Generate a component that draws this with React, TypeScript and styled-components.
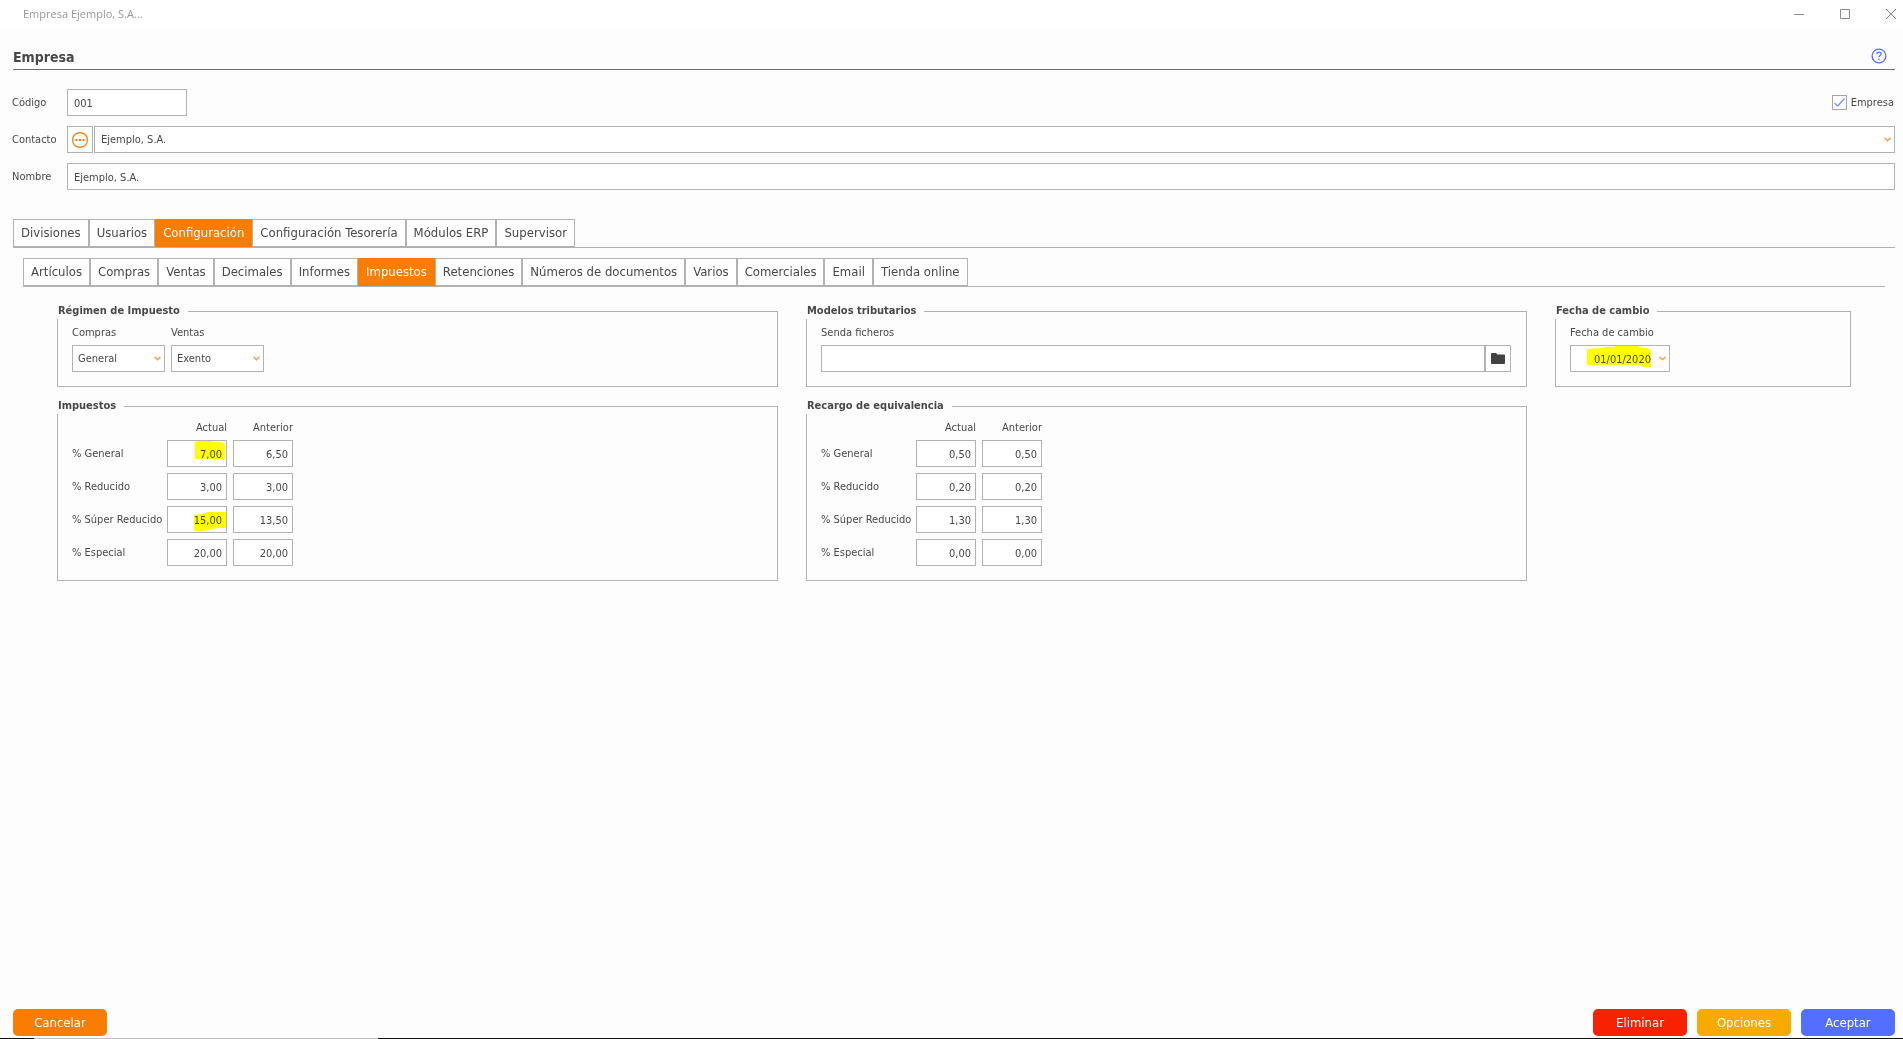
import React from "react";
import styled, { createGlobalStyle } from "styled-components";

const color = {
  page: "#fdfdfd",
  line: "#b2b2b2",
  text: "#484848",
  orange: "#f87d00",
  blue: "#546fff",
  red: "#f82100",
  amber: "#f7ab00",
  mark: "#ffff00",
};

const GlobalStyle = createGlobalStyle`
  *, *::before, *::after { box-sizing: border-box; }
  body {
    margin: 0;
    background: ${color.page};
    color: ${color.text};
    font: 11px/14px "DejaVu Sans Condensed", Tahoma, "Noto Sans", sans-serif;
  }
  button, input, select { font: inherit; color: inherit; }
`;

const Window = styled.div`
  min-height: 100vh;
  display: flex;
  flex-direction: column;
`;

const TitleBar = styled.header`
  display: flex;
  justify-content: space-between;
  height: 29px;
  padding-left: 23px;
  background: #fff;
  color: #999;
  font: 11px/28px "Open Sans", "Noto Sans", sans-serif;
`;

const WindowControls = styled.div`
  display: flex;
  margin-right: -11px;
  overflow: hidden;
`;

const WindowButton = styled.button`
  display: grid;
  place-items: center;
  width: 46px;
  height: 27px;
  padding: 0;
  border: 0;
  background: none;
  color: #8c8c8c;
`;

const TitleRow = styled.div`
  display: flex;
  align-items: center;
  justify-content: space-between;
  height: 41px;
  margin: 0 8px 0 13px;
  padding: 14px 8px 0 0;
  border-bottom: 1px solid #6e6e6e;
`;

const Title = styled.h1`
  margin: 0;
  padding-top: 2px;
  font-size: 14px;
  line-height: 18px;
`;

const HelpButton = styled.button`
  display: flex;
  padding: 0;
  border: 0;
  background: none;
  color: ${color.blue};
`;

const Main = styled.main`
  flex: 1;
  padding: 19px 8px 0 12px;
`;

const Form = styled.div`
  display: grid;
  gap: 10px;
  margin-bottom: 29px;
`;

const FormRow = styled.div`
  display: grid;
  grid-template-columns: 55px minmax(0, 1fr);
  align-items: center;
`;

const Between = styled.div`
  display: flex;
  align-items: center;
  justify-content: space-between;
`;

const Joined = styled.div<{ $gap?: number }>`
  display: flex;
  gap: ${(p) => p.$gap ?? 0}px;
`;

const Input = styled.input<{ $w?: number; $right?: boolean; $padEnd?: number }>`
  display: block;
  width: ${(p) => (p.$w ? `${p.$w}px` : "100%")};
  min-width: 0;
  height: 27px;
  padding: 1px ${(p) => p.$padEnd ?? 4}px 0 6px;
  border: 1px solid ${color.line};
  border-radius: 0;
  background: #fff;
  outline: 0;
  text-align: ${(p) => (p.$right ? "right" : "left")};
`;

const IconButton = styled.button`
  display: grid;
  flex: none;
  place-items: center;
  width: 26px;
  height: 27px;
  padding: 0;
  border: 1px solid ${color.line};
  background: #fff;
`;

const FieldBox = styled.div<{ $w?: number }>`
  position: relative;
  width: ${(p) => (p.$w ? `${p.$w}px` : "100%")};
`;

const Select = styled.select<{ $pad?: number }>`
  display: block;
  width: 100%;
  height: 27px;
  padding: 1px 16px 0 ${(p) => p.$pad ?? 5}px;
  border: 1px solid ${color.line};
  border-radius: 0;
  background: #fff;
  appearance: none;
  outline: 0;
`;

const Arrow = styled.svg`
  position: absolute;
  top: 11px;
  right: 4px;
  pointer-events: none;
`;

const Marker = styled.svg`
  position: absolute;
  inset: 0;
  width: 100%;
  height: 100%;
  mix-blend-mode: multiply;
  pointer-events: none;
`;

const CheckLabel = styled.label`
  display: flex;
  align-items: center;
  gap: 4px;
  padding-right: 1px;
`;

const CheckFrame = styled.span`
  position: relative;
  display: flex;
`;

const Check = styled.input`
  width: 15px;
  height: 15px;
  margin: 0;
  border: 1px solid #a6a6a6;
  background: #fff;
  appearance: none;
  &:not(:checked) + svg { display: none; }
`;

const CheckMark = styled.svg`
  position: absolute;
  inset: 0;
  pointer-events: none;
`;

const Tabs = styled.nav<{ $indent?: boolean }>`
  display: flex;
  margin-left: ${(p) => (p.$indent ? "1px" : "0")};
  border-bottom: 1px solid ${color.line};
`;

const Tab = styled.button<{ $active?: boolean }>`
  height: 28px;
  padding: 0 7px;
  border: 1px solid ${(p) => (p.$active ? color.orange : color.line)};
  background: ${(p) => (p.$active ? color.orange : "#fff")};
  color: ${(p) => (p.$active ? "#fff" : color.text)};
  font-size: 13px;
  white-space: nowrap;
`;

const SubPanel = styled.section`
  padding: 10px 10px 0 11px;
`;

const Groups = styled.div`
  display: grid;
  grid-template-columns: 721fr 721fr 296fr;
  gap: 11px 28px;
  margin: 16px 34px 0;
`;

const Group = styled.fieldset`
  min-width: 0;
  margin: 0;
  padding: 7px 15px 14px 14px;
  border: 1px solid ${color.line};
`;

const Legend = styled.legend`
  margin-left: -15px;
  padding: 0 8px 0 1px;
  background: ${color.page};
  font-weight: bold;
  line-height: 16px;
`;

const Field = styled.div<{ $w?: number }>`
  display: grid;
  gap: 5px;
  width: ${(p) => (p.$w ? `${p.$w}px` : "auto")};
`;

const RateTable = styled.table`
  border-spacing: 0;
  th { padding: 0 0 5px; font-weight: normal; text-align: right; }
  td { padding: 0 6px 6px 0; }
  thead th + th { padding-right: 6px; }
  tbody th { width: 95px; padding: 0 0 6px; text-align: left; white-space: nowrap; }
  tbody tr:last-child > * { padding-bottom: 0; }
`;

const Footer = styled.footer`
  display: flex;
  gap: 10px;
  padding: 0 8px 2px 13px;
`;

const Action = styled.button<{ $bg: string; $first?: boolean }>`
  width: 94px;
  height: 27px;
  margin-right: ${(p) => (p.$first ? "auto" : "0")};
  padding: 0;
  border: 0;
  border-radius: 5px;
  background: ${(p) => p.$bg};
  color: #fff;
  font-size: 13px;
`;

const BottomEdge = styled.div`
  height: 1px;
  background: linear-gradient(90deg, #111 34px, #bdbdbd 34px, #bdbdbd 378px, #111 378px);
`;

const Chevron = () => (
  <Arrow width="7" height="5" viewBox="0 0 7 5" fill="none" stroke="#ff9a3c" strokeWidth="1.3">
    <path d="M.5.7 3.5 3.8 6.5.7" />
  </Arrow>
);

const Highlight = ({ points }: { points: string }) => (
  <Marker aria-hidden="true">
    <polygon points={points} fill={color.mark} />
  </Marker>
);

type TabBarProps = { tabs: string[]; active: string; indent?: boolean };

const TabBar = ({ tabs, active, indent }: TabBarProps) => (
  <Tabs $indent={indent}>
    {tabs.map((t) => (
      <Tab key={t} type="button" $active={t === active} aria-current={t === active}>
        {t}
      </Tab>
    ))}
  </Tabs>
);

type Rate = { name: string; actual: string; previous: string; mark?: string };

const taxes: Rate[] = [
  { name: "% General", actual: "7,00", previous: "6,50", mark: "28,2 31,1 45,1 46,2 54,2 58,4 58,20 51,19 28,19" },
  { name: "% Reducido", actual: "3,00", previous: "3,00" },
  { name: "% Súper Reducido", actual: "15,00", previous: "13,50", mark: "27,9 35,8 41,6 59,6 59,22 50,22 38,25 27,25" },
  { name: "% Especial", actual: "20,00", previous: "20,00" },
];

const surcharges: Rate[] = [
  { name: "% General", actual: "0,50", previous: "0,50" },
  { name: "% Reducido", actual: "0,20", previous: "0,20" },
  { name: "% Súper Reducido", actual: "1,30", previous: "1,30" },
  { name: "% Especial", actual: "0,00", previous: "0,00" },
];

const Rates = ({ rows }: { rows: Rate[] }) => (
  <RateTable>
    <thead>
      <tr>
        <th />
        <th scope="col">Actual</th>
        <th scope="col">Anterior</th>
      </tr>
    </thead>
    <tbody>
      {rows.map((r) => (
        <tr key={r.name}>
          <th scope="row">{r.name}</th>
          <td>
            <FieldBox $w={60}>
              <Input $right aria-label={`${r.name} actual`} defaultValue={r.actual} />
              {r.mark && <Highlight points={r.mark} />}
            </FieldBox>
          </td>
          <td>
            <FieldBox $w={60}>
              <Input $right aria-label={`${r.name} anterior`} defaultValue={r.previous} />
            </FieldBox>
          </td>
        </tr>
      ))}
    </tbody>
  </RateTable>
);

const mainTabs = ["Divisiones", "Usuarios", "Configuración", "Configuración Tesorería", "Módulos ERP", "Supervisor"];
const configTabs = [
  "Artículos", "Compras", "Ventas", "Decimales", "Informes", "Impuestos", "Retenciones",
  "Números de documentos", "Varios", "Comerciales", "Email", "Tienda online",
];

export default function App() {
  return (
    <Window>
      <GlobalStyle />
      <TitleBar>
        <span>Empresa Ejemplo, S.A...</span>
        <WindowControls>
          <WindowButton aria-label="Minimizar">
            <svg width="10" height="10" stroke="currentColor"><path d="M0 5.5h10" /></svg>
          </WindowButton>
          <WindowButton aria-label="Maximizar">
            <svg width="10" height="10" fill="none" stroke="currentColor"><path d="M.5.5h9v9h-9z" /></svg>
          </WindowButton>
          <WindowButton aria-label="Cerrar">
            <svg width="10" height="10" stroke="currentColor"><path d="M0 0l10 10M10 0 0 10" /></svg>
          </WindowButton>
        </WindowControls>
      </TitleBar>

      <TitleRow>
        <Title>Empresa</Title>
        <HelpButton aria-label="Ayuda">
          <svg width="16" height="16" viewBox="0 0 16 16" fill="none" stroke="currentColor" strokeWidth="1.3">
            <circle cx="8" cy="8" r="6.9" />
            <path d="M5.9 6.2C5.9 3.3 10.2 3.5 10.1 6c0 1.5-2.1 1.6-2.1 3.3" />
            <path d="M8 10.8v1.4" />
          </svg>
        </HelpButton>
      </TitleRow>

      <Main>
        <Form>
          <FormRow>
            <label htmlFor="codigo">Código</label>
            <Between>
              <Input id="codigo" $w={120} defaultValue="001" />
              <CheckLabel>
                <CheckFrame>
                  <Check type="checkbox" defaultChecked />
                  <CheckMark width="15" height="15" fill="none" stroke="#7d90ff" strokeWidth="1.3">
                    <path d="M2.5 8 5.7 11 12.5 3.5" />
                  </CheckMark>
                </CheckFrame>
                Empresa
              </CheckLabel>
            </Between>
          </FormRow>
          <FormRow>
            <label htmlFor="contacto">Contacto</label>
            <Joined $gap={1}>
              <IconButton aria-label="Buscar contacto">
                <svg width="16" height="16" viewBox="0 0 16 16" fill="none" stroke={color.orange}>
                  <circle cx="8" cy="8" r="7.4" strokeWidth="1.2" />
                  <path d="M3.5 8h2M7 8h2M10.5 8h2" strokeWidth="2" />
                </svg>
              </IconButton>
              <FieldBox>
                <Select id="contacto" $pad={6}>
                  <option>Ejemplo, S.A.</option>
                </Select>
                <Chevron />
              </FieldBox>
            </Joined>
          </FormRow>
          <FormRow>
            <label htmlFor="nombre">Nombre</label>
            <Input id="nombre" defaultValue="Ejemplo, S.A." />
          </FormRow>
        </Form>

        <TabBar tabs={mainTabs} active="Configuración" indent />

        <SubPanel>
          <TabBar tabs={configTabs} active="Impuestos" />
          <Groups>
            <Group>
              <Legend>Régimen de Impuesto</Legend>
              <Joined $gap={6}>
                <Field $w={93}>
                  <label htmlFor="compras">Compras</label>
                  <FieldBox>
                    <Select id="compras"><option>General</option></Select>
                    <Chevron />
                  </FieldBox>
                </Field>
                <Field $w={93}>
                  <label htmlFor="ventas">Ventas</label>
                  <FieldBox>
                    <Select id="ventas"><option>Exento</option></Select>
                    <Chevron />
                  </FieldBox>
                </Field>
              </Joined>
            </Group>

            <Group>
              <Legend>Modelos tributarios</Legend>
              <Field>
                <label htmlFor="senda">Senda ficheros</label>
                <Joined>
                  <Input id="senda" />
                  <IconButton aria-label="Elegir carpeta">
                    <svg width="14" height="12" viewBox="0 0 14 12" fill="#424242">
                      <path d="M1 0h4l1.5 1.500H13a1 1 0 0 1 1 1V10a1 1 0 0 1-1 1H1a1 1 0 0 1-1-1V1a1 1 0 0 1 1-1z" />
                    </svg>
                  </IconButton>
                </Joined>
              </Field>
            </Group>

            <Group>
              <Legend>Fecha de cambio</Legend>
              <Field $w={100}>
                <label htmlFor="fecha">Fecha de cambio</label>
                <FieldBox>
                  <Input id="fecha" $right $padEnd={18} defaultValue="01/01/2020" />
                  <Highlight points="17,4 33,3 34,2 44,2 45,1 69,1 70,3 77,3 81,5 81,22 73,22 69,20 17,20" />
                  <Chevron />
                </FieldBox>
              </Field>
            </Group>

            <Group>
              <Legend>Impuestos</Legend>
              <Rates rows={taxes} />
            </Group>

            <Group>
              <Legend>Recargo de equivalencia</Legend>
              <Rates rows={surcharges} />
            </Group>
          </Groups>
        </SubPanel>
      </Main>

      <Footer>
        <Action $bg={color.orange} $first>Cancelar</Action>
        <Action $bg={color.red}>Eliminar</Action>
        <Action $bg={color.amber}>Opciones</Action>
        <Action $bg={color.blue}>Aceptar</Action>
      </Footer>
      <BottomEdge />
    </Window>
  );
}
